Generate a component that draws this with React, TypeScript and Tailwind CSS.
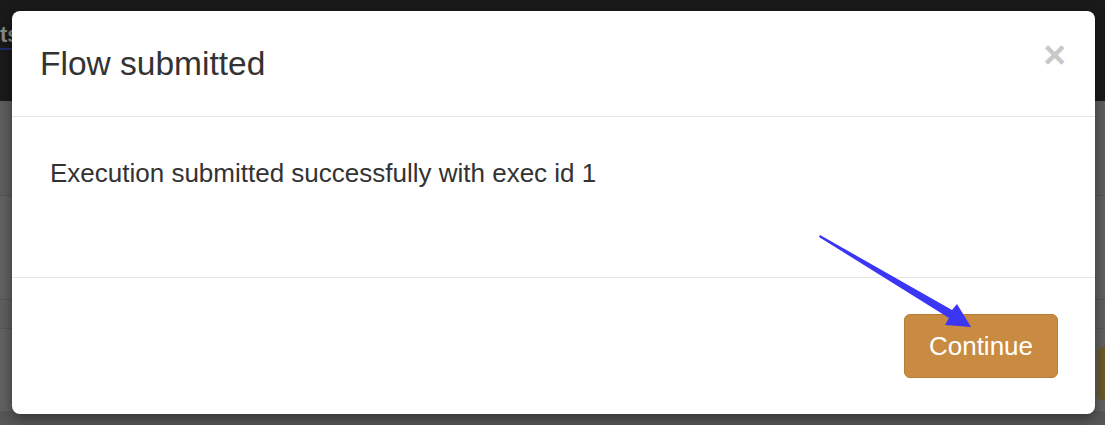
import React from 'react';

// Page behind the modal, dimmed by the backdrop
const Backdrop: React.FC = () => (
  <div className="flex h-full w-full flex-col">
    <div className="relative h-[101px] bg-[#1a1a1a]">
      <span className="absolute left-0 top-[18px] text-[22px] font-bold text-[#8a8a8a]">ts</span>
      <div className="absolute left-0 top-[48px] h-[2px] w-[14px] bg-[#1f2a6e]" />
    </div>
    <div className="h-[95px] border-b border-[#555] bg-[#5f5f5f]" />
    <div className="h-[104px] border-b border-[#565656] bg-[#626262]" />
    <div className="h-[29px] border-b border-[#575757] bg-[#606060]" />
    <div className="relative h-[82px] bg-[#626262]">
      <div className="absolute right-[-6px] top-[18px] h-[53px] w-[14px] rounded-[5px] bg-[#6b5c2c]" />
    </div>
    <div className="flex-1 bg-[#575757]" />
  </div>
);

export default function App() {
  return (
    <div
      className="relative h-[425px] w-[1105px] overflow-hidden"
      style={{ fontFamily: '"Liberation Sans", Arial, sans-serif' }}
    >
      <Backdrop />

      {/* Modal */}
      <div className="absolute left-[12px] top-[11px] flex h-[403px] w-[1083px] flex-col rounded-[8px] bg-white shadow-[0_4px_14px_rgba(0,0,0,0.45)]">
        <div className="flex h-[106px] items-start justify-between border-b border-[#e5e5e5] px-[28px] pb-[28px] pt-[29px]">
          <h4 className="text-[33.5px] leading-[48px] text-[#333]">Flow submitted</h4>
          <button className="mr-[1px] mt-[-5px] text-[39px] font-bold leading-none text-[#c8c8c8]">×</button>
        </div>
        <div className="h-[161px] border-b border-[#e5e5e5] px-[38px] pt-[38px]">
          <p className="text-[26px] leading-[37px] text-[#333]">Execution submitted successfully with exec id 1</p>
        </div>
        <div className="flex flex-1 items-center justify-end px-[37px]">
          <button className="h-[64px] w-[154px] rounded-[6px] border border-[#b97c36] bg-[#c98b42] text-[26px] text-white">
            Continue
          </button>
        </div>
      </div>

      {/* Annotation arrow */}
      <svg className="pointer-events-none absolute left-0 top-0" width="1105" height="425" viewBox="0 0 1105 425">
        <polygon
          points="820,235 952,310 957,304 971,327 945,325 949,318 819,237"
          fill="#3b35f4"
        />
      </svg>
    </div>
  );
}
